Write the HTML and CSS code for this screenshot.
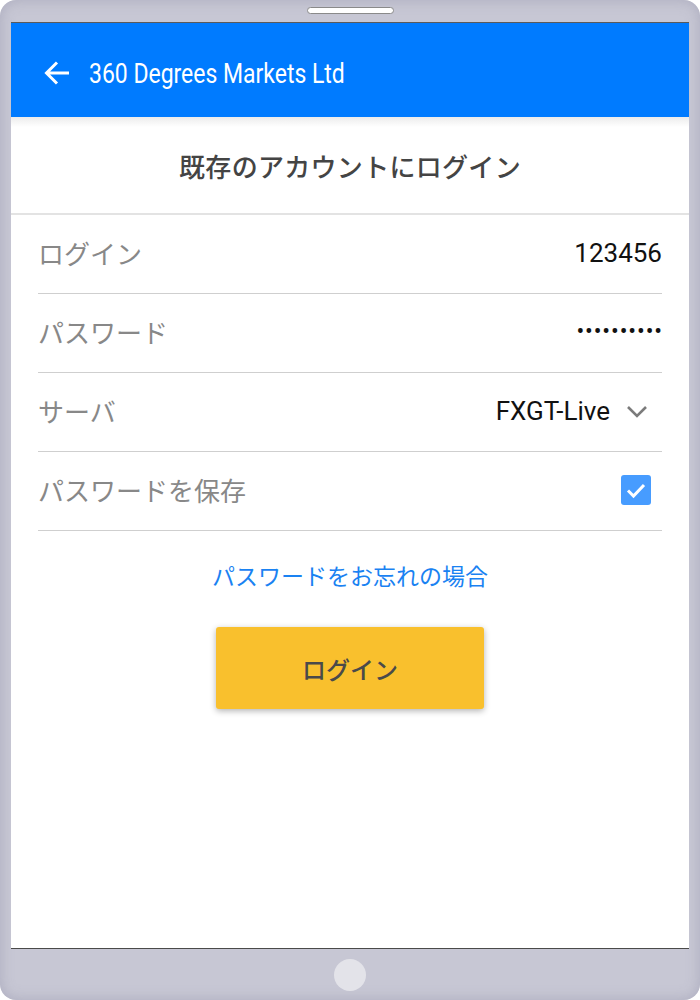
FILE: index.html
```html
<!DOCTYPE html>
<html lang="ja">
<head>
    <meta charset="UTF-8">
    <meta name="viewport" content="width=device-width, initial-scale=1.0">
    <title>ログイン</title>
    <link rel="stylesheet" href="styles.css">
</head>
<body>
    <div class="device">
        <div class="device-top">
            <div class="speaker"></div>
        </div>

        <div class="screen">
            <header class="app-bar">
                <svg class="back" width="28" height="28" viewBox="0 0 28 28">
                    <path d="M26 14H4M14 3.5L3.5 14 14 24.5" fill="none" stroke="#fff" stroke-width="3"/>
                </svg>
                <span class="app-title">360 Degrees Markets Ltd</span>
            </header>

            <div class="panel-title">既存のアカウントにログイン</div>

            <div class="form">
                <div class="row">
                    <span class="label">ログイン</span>
                    <span class="value">123456</span>
                </div>
                <div class="row">
                    <span class="label">パスワード</span>
                    <span class="value dots">••••••••••</span>
                </div>
                <div class="row">
                    <span class="label">サーバ</span>
                    <span class="value select">FXGT-Live
                        <svg class="chevron" width="22" height="14" viewBox="0 0 22 14">
                            <path d="M2 2l9 9 9-9" fill="none" stroke="#7b7b7b" stroke-width="2.6"/>
                        </svg>
                    </span>
                </div>
                <div class="row">
                    <span class="label">パスワードを保存</span>
                    <span class="checkbox">
                        <svg width="30" height="30" viewBox="0 0 30 30">
                            <path d="M7 15.5l5.5 5.5 10.5-11" fill="none" stroke="#fff" stroke-width="3"/>
                        </svg>
                    </span>
                </div>

                <a class="forgot" href="#">パスワードをお忘れの場合</a>

                <div class="actions">
                    <button class="login-btn">ログイン</button>
                </div>
            </div>
        </div>

        <div class="device-bottom">
            <div class="home"></div>
        </div>
    </div>
</body>
</html>
```

FILE: styles.css
```css
* { box-sizing: border-box; }

body {
    margin: 0;
    background: #fff;
    font-family: Roboto, "Noto Sans CJK JP", sans-serif;
}

.device {
    width: 700px;
    height: 1000px;
    border-radius: 16px;
    background: #c7c7d4;
    box-shadow: inset 0 0 14px rgba(120, 120, 150, 0.35);
    padding: 0 11px;
    display: flex;
    flex-direction: column;
}

.device-top {
    height: 22px;
    display: flex;
    justify-content: center;
    padding-top: 7px;
}

.speaker {
    width: 87px;
    height: 7px;
    background: #fff;
    border: 1px solid #8a8a8a;
    border-radius: 4px;
}

.screen {
    height: 927px;
    background: #fff;
    border-top: 1px solid #5a5a5a;
    border-bottom: 1px solid #4a4a4a;
    display: flex;
    flex-direction: column;
}

.app-bar {
    height: 94px;
    background: #007bff;
    display: flex;
    align-items: center;
    padding-left: 32px;
    padding-top: 6px;
}

.back {
    flex-shrink: 0;
}

.app-title {
    color: #fff;
    font-size: 28px;
    margin-left: 18px;
    transform: scaleX(0.82);
    transform-origin: left center;
    white-space: nowrap;
}

.panel-title {
    height: 98px;
    display: flex;
    align-items: center;
    justify-content: center;
    padding-top: 1px;
    font-size: 26px;
    font-weight: 500;
    color: #444;
    letter-spacing: 0.3px;
    background: linear-gradient(#ececec, #fff 10px);
    border-bottom: 2px solid #e3e3e3;
}

.form {
    padding: 0 27px;
    display: flex;
    flex-direction: column;
}

.row {
    height: 79px;
    display: flex;
    align-items: center;
    justify-content: space-between;
    border-bottom: 1px solid #cfcfcf;
    padding-bottom: 3px;
}

.label {
    font-size: 26px;
    color: #888;
}

.value {
    font-size: 26px;
    color: #111;
}

.dots {
    font-size: 23px;
    letter-spacing: 0.9px;
    margin-right: -1px;
}

.select {
    display: flex;
    align-items: center;
    gap: 16px;
    padding-right: 14px;
}

.chevron {
    margin-top: 2px;
}

.checkbox {
    width: 30px;
    height: 30px;
    background: #479cff;
    border-radius: 3px;
    margin-right: 11px;
    display: flex;
}

.forgot {
    align-self: center;
    margin-top: 27px;
    font-size: 23px;
    color: #1a82f2;
    text-decoration: none;
}

.actions {
    display: flex;
    justify-content: center;
    margin-top: 35px;
}

.login-btn {
    width: 268px;
    height: 82px;
    border: none;
    border-radius: 3px;
    background: #f9c02d;
    color: #4a4a4a;
    font-family: Roboto, "Noto Sans CJK JP", sans-serif;
    font-size: 24px;
    font-weight: 500;
    box-shadow: 0 2px 6px rgba(0, 0, 0, 0.3);
}

.device-bottom {
    flex: 1;
    display: flex;
    align-items: center;
    justify-content: center;
}

.home {
    width: 32px;
    height: 32px;
    border-radius: 50%;
    background: #e3e3e9;
}
```
